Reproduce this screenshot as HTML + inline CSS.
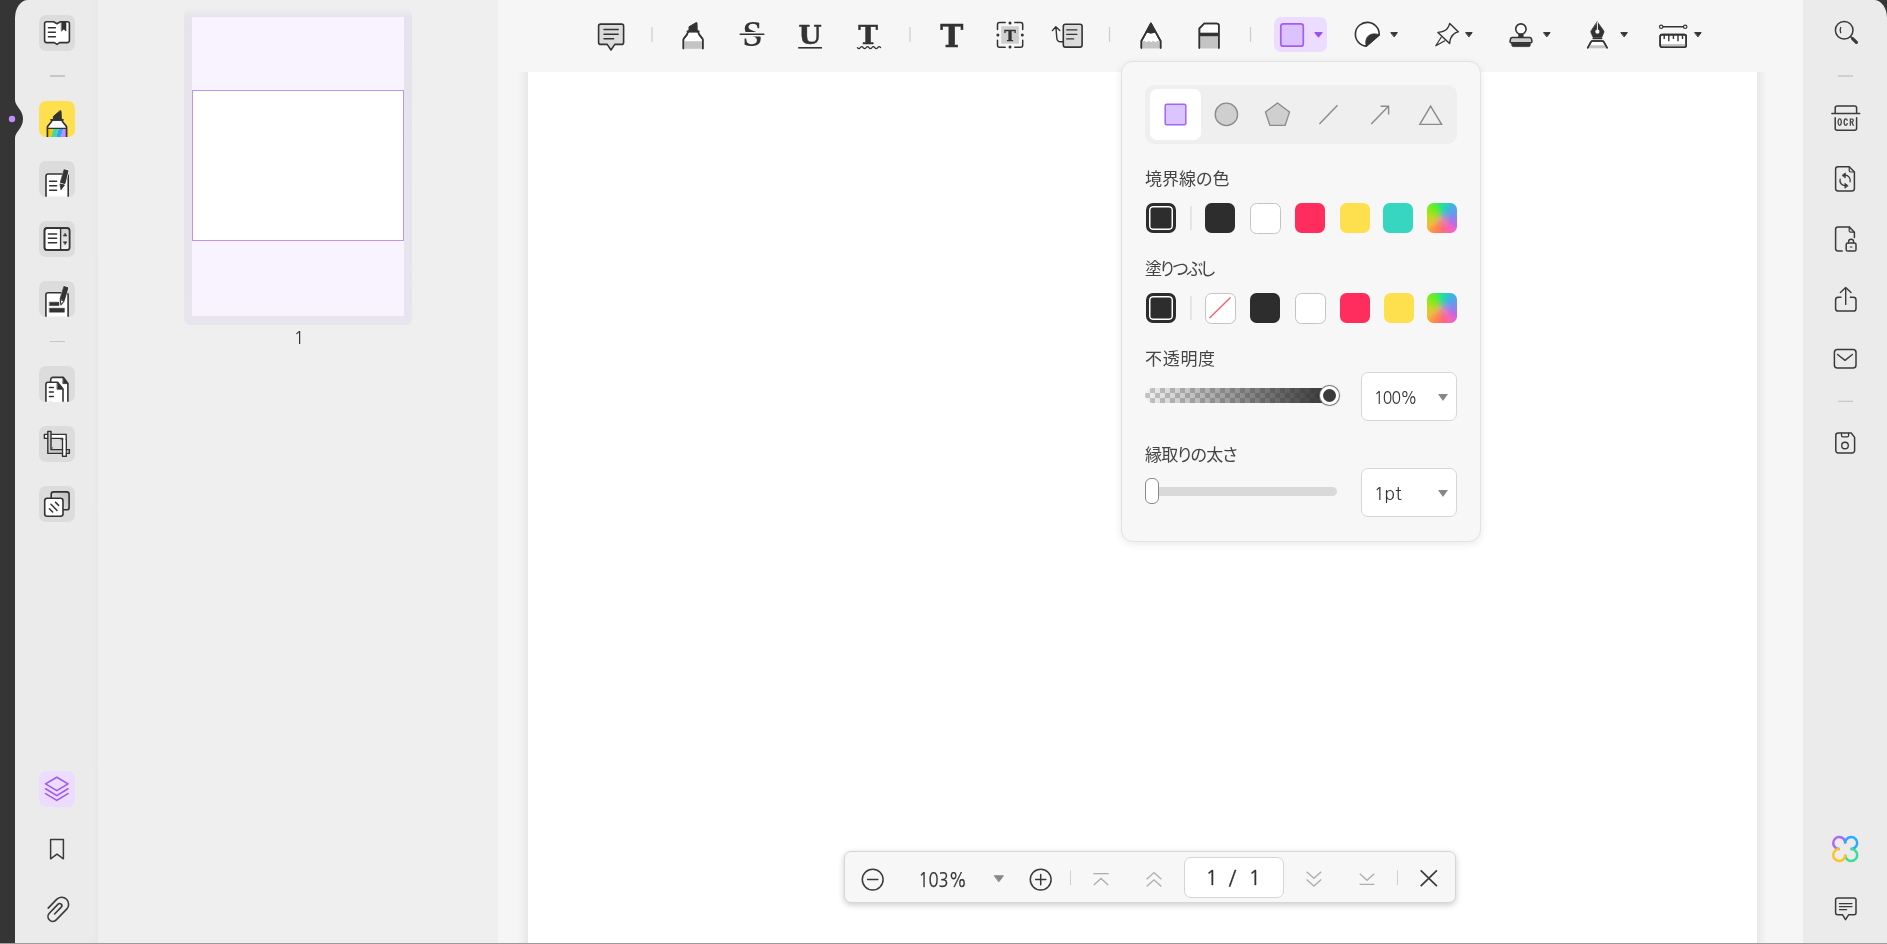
<!DOCTYPE html>
<html lang="ja">
<head>
<meta charset="utf-8">
<title>UPDF</title>
<style>
*{box-sizing:border-box;margin:0;padding:0}
html,body{width:1887px;height:944px;overflow:hidden}
body{position:relative;background:#353535;font-family:"Liberation Sans","Noto Sans CJK JP",sans-serif;color:#333}
.abs{position:absolute}
#lside{left:15px;top:0;width:83px;height:943px;background:#ebebeb;border-top-left-radius:13px 18px}
#thumbs{left:98px;top:0;width:400px;height:943px;background:#efefef}
#main{left:498px;top:0;width:1305px;height:943px;background:#f6f6f6}
#rside{left:1803px;top:0;width:84px;height:943px;background:#ebebeb;border-top-right-radius:13px 18px}
#page{left:528px;top:72px;width:1229px;height:871px;background:#fff}
.btn{position:absolute;left:39px;width:36px;height:36px;border-radius:7px;background:#dcdcdc}
.sep{position:absolute;height:1.2px;background:#c6c6c6}
svg{position:absolute;overflow:visible;will-change:transform}
.lbl,.selbox,.gs{will-change:transform}

#pop{left:1121px;top:61px;width:360px;height:481px;background:#f7f7f7;border:1px solid #e2e2e2;border-radius:12px;box-shadow:0 2px 8px rgba(0,0,0,.085)}
.lbl{position:absolute;left:1145.4px;font-size:17px;line-height:24px;color:#444;white-space:nowrap;font-feature-settings:"palt" 1}
.sw{position:absolute;width:30px;height:30px;border-radius:6.5px}
.swsel{position:absolute;left:1146px;width:30px;height:30px;border-radius:7px;background:#2d2d2d;border:3px solid #2d2d2d;box-shadow:inset 0 0 0 1.5px #fff}
.vsep{position:absolute;width:2px;background:#e4e4e4}
.selbox{position:absolute;left:1361px;width:96px;height:49px;background:#fff;border:1.4px solid #d6d6d6;border-radius:7px;font-family:"NanumGothic","Liberation Sans",sans-serif;font-size:17.5px;line-height:47px;padding-left:12px;color:#333}
.tri{position:absolute;width:0;height:0;border-left:5px solid transparent;border-right:5px solid transparent;border-top:7px solid #888}
.rainbow{background:radial-gradient(circle at 50% 52%,rgba(206,160,170,.75) 0,rgba(206,160,170,0) 45%),conic-gradient(from 0deg at 50% 50%,#22dfa0 0deg,#3fb4e0 40deg,#7c8cf0 80deg,#b56ee6 110deg,#f562c0 140deg,#ff6880 175deg,#ff8a48 210deg,#f2b840 240deg,#c6d822 270deg,#86ea18 305deg,#4aec48 340deg,#22dfa0 360deg)}
.nar{display:inline-block;transform:scaleX(.9);transform-origin:0 50%;letter-spacing:-.9px}
.selbox{line-height:51px !important}
</style>
</head>
<body>
<div class="abs" style="left:0;top:943px;width:1887px;height:1px;background:#9b9b9b"></div>
<div id="lside" class="abs"></div>
<div id="thumbs" class="abs"></div>
<div class="abs" style="left:91px;top:0;width:7px;height:943px;background:linear-gradient(90deg,#ebebeb,#e8e8e8)"></div>
<div id="main" class="abs"></div>
<div id="rside" class="abs"></div>
<div class="abs" style="left:518px;top:72px;width:10px;height:871px;background:linear-gradient(90deg,#f6f6f6,#e8e8e8)"></div>
<div class="abs" style="left:1757px;top:72px;width:10px;height:871px;background:linear-gradient(90deg,#e8e8e8,#f6f6f6)"></div>
<div id="page" class="abs"></div>

<!-- left notch -->
<svg class="abs" style="left:0;top:96px" width="30" height="46" viewBox="0 0 30 46">
<path d="M15 0 L15 4 C15 10 23 14 23 23 C23 32 15 36 15 42 L15 46 L0 46 L0 0 Z" fill="#353535"/>
<circle cx="12" cy="23" r="3.2" fill="#c18cfb"/>
</svg>
<!-- left sidebar buttons -->
<div class="btn" style="top:15px"></div>
<div class="sep" style="left:50px;top:75.4px;width:15px"></div>
<div class="btn" style="top:101px;background:#fee04f"></div>
<div class="btn" style="top:161px"></div>
<div class="btn" style="top:221px"></div>
<div class="btn" style="top:281px"></div>
<div class="sep" style="left:50px;top:340.7px;width:15px"></div>
<div class="btn" style="top:366px"></div>
<div class="btn" style="top:426px"></div>
<div class="btn" style="top:486px"></div>
<div class="btn" style="top:771px;background:#ecdcff"></div>
<!-- thumbnail -->
<div class="abs" style="left:184px;top:9px;width:228px;height:316px;background:linear-gradient(180deg,#ededee 0,#e7e3ed 8px,#e9e5ef 100%);border-radius:6px"></div>
<div class="abs" style="left:192px;top:17px;width:212px;height:299px;background:#f8f3fe"></div>
<div class="abs" style="left:192px;top:90px;width:212px;height:151px;background:#fff;border:1.4px solid #bd95f6"></div>
<div class="abs" style="left:279px;top:325.6px;width:40px;text-align:center;font-family:'NanumGothic','Liberation Sans',sans-serif;font-size:17.5px;line-height:24px;color:#333;will-change:transform">1</div>

<!-- popup -->
<div id="pop" class="abs"></div>
<div class="abs" style="left:1145px;top:85px;width:312px;height:59px;background:#efefef;border-radius:9px"></div>
<div class="abs" style="left:1150px;top:89px;width:51px;height:51px;background:#fff;border-radius:7px"></div>
<svg class="abs" style="left:1145px;top:85px" width="312" height="59" viewBox="1145 85 312 59" fill="none">
<rect x="1165.2" y="104.2" width="20.6" height="20.6" rx="1.5" fill="#dcc5ff" stroke="#a066f5" stroke-width="1.5"/>
<circle cx="1226.4" cy="114.4" r="11.2" fill="#cfcfcf" stroke="#8a8a8a" stroke-width="1.3"/>
<path d="M1277.5 102.9 L1289.6 111.9 L1285.2 125.3 L1269.8 125.3 L1265.4 111.9 Z" fill="#cfcfcf" stroke="#8a8a8a" stroke-width="1.3" stroke-linejoin="round"/>
<path d="M1319.4 123.9 L1337.5 105.3" stroke="#8a8a8a" stroke-width="1.4"/>
<path d="M1371.2 124.1 L1388.5 106.3 M1380.6 106.2 L1388.6 106.2 L1388.6 114.4" stroke="#8a8a8a" stroke-width="1.4"/>
<path d="M1430.6 106.2 L1441.6 124.4 L1419.8 124.4 Z" stroke="#8a8a8a" stroke-width="1.4" stroke-linejoin="miter"/>
</svg>
<div class="lbl" style="top:168px">境界線の色</div>
<div class="swsel" style="top:203px"></div>
<div class="vsep" style="left:1190px;top:206px;height:24px"></div>
<div class="sw" style="left:1205px;top:203px;background:#2d2d2d"></div>
<div class="sw" style="left:1249.5px;top:202.5px;width:31px;height:31px;background:#fff;border:1.6px solid #c4c4c4"></div>
<div class="sw" style="left:1295px;top:203px;background:#ff2d5d"></div>
<div class="sw" style="left:1340px;top:203px;background:#fee04f"></div>
<div class="sw" style="left:1383px;top:203px;background:#37d6c1"></div>
<div class="sw rainbow" style="left:1427px;top:203px"></div>
<div class="lbl" style="top:258px;letter-spacing:-1.9px">塗りつぶし</div>
<div class="swsel" style="top:293px"></div>
<div class="vsep" style="left:1190px;top:296px;height:24px"></div>
<div class="sw" style="left:1204.5px;top:292.5px;width:31px;height:31px;background:#fff;border:1.6px solid #c4c4c4;overflow:hidden"></div>
<svg class="abs" style="left:1205px;top:293px" width="30" height="30" viewBox="0 0 30 30"><path d="M4.5 25 L25.5 4.5" stroke="#ff5a6a" stroke-width="1.3"/></svg>
<div class="sw" style="left:1249.5px;top:293px;background:#2d2d2d"></div>
<div class="sw" style="left:1294.5px;top:292.5px;width:31px;height:31px;background:#fff;border:1.6px solid #c4c4c4"></div>
<div class="sw" style="left:1340px;top:293px;background:#ff2d5d"></div>
<div class="sw" style="left:1383.5px;top:293px;background:#fee04f"></div>
<div class="sw rainbow" style="left:1427px;top:293px"></div>
<div class="lbl" style="top:348px;letter-spacing:.7px">不透明度</div>
<!-- opacity slider -->
<div class="abs" style="left:1145px;top:388px;width:193px;height:15px;border-radius:8px;overflow:hidden;background-color:#f2f2f2;background-image:linear-gradient(45deg,#c4c4c4 25%,transparent 25%,transparent 75%,#c4c4c4 75%),linear-gradient(45deg,#c4c4c4 25%,transparent 25%,transparent 75%,#c4c4c4 75%);background-size:10px 10px;background-position:0 0,5px 5px"><div style="position:absolute;left:0;top:0;right:0;bottom:0;background:linear-gradient(90deg,rgba(45,45,45,0) 0%,rgba(45,45,45,1) 100%)"></div></div>
<div class="abs" style="left:1320px;top:385.5px;width:19px;height:19px;border-radius:50%;background:#3a3a3a;border:3px solid #fff;box-shadow:0 0 0 1px #7a7a7a,0 0 3px rgba(0,0,0,.3)"></div>
<div class="selbox" style="top:372px"><span class="nar">100%</span></div>
<div class="tri" style="left:1438px;top:394px"></div>
<div class="lbl" style="top:444px;letter-spacing:-.85px">縁取りの太さ</div>
<div class="abs" style="left:1150px;top:487px;width:187px;height:9px;border-radius:5px;background:#d9d9d9"></div>
<div class="abs" style="left:1145px;top:478px;width:13.5px;height:26px;border-radius:6px;background:#fff;border:1.5px solid #8a8a8a"></div>
<div class="selbox" style="top:468px"><span>1pt</span></div>
<div class="tri" style="left:1438px;top:490px"></div>

<!-- top toolbar -->
<div class="abs" style="left:1274px;top:17px;width:53px;height:35px;border-radius:7px;background:#ecdcff"></div>
<svg class="abs" style="left:580px;top:0" width="1140" height="70" viewBox="580 0 1140 70" fill="none" stroke-linecap="round" stroke-linejoin="round">
<g stroke="#333" stroke-width="1.6">
<!-- comment -->
<path d="M600.6 24.1 H621.6 a2 2 0 0 1 2 2 V42.4 a2 2 0 0 1 -2 2 H614.8 L611 50 L607.2 44.4 H600.6 a2 2 0 0 1 -2 -2 V26.1 a2 2 0 0 1 2 -2 Z" fill="#dcdcdc"/>
<path d="M604 29.6 H618.2 M604 34.3 H618.2 M604 38.7 H613.6" stroke-width="1.5"/>
<!-- highlighter -->
<path d="M683.4 48.6 V39.6 C683.4 37.6 687.4 36.2 688.2 31.4 H698 C698.8 36.2 702.8 37.6 702.8 39.6 V48.6" fill="#fff"/>
<path d="M684.2 41.2 H702 V48.8 H684.2 Z" fill="#c4c4c4" stroke="none"/>
<path d="M683.4 48.6 V39.6 C683.4 37.6 687.4 36.2 688.2 31.4 H698 C698.8 36.2 702.8 37.6 702.8 39.6 V48.6" stroke-width="1.5"/>
<path d="M689 31 V26.8 L696.2 22.6 Q697 22.3 697 23.2 L697.2 31 Z" fill="#333" stroke-width="1"/>
<path d="M687.4 31.3 H698.8" stroke-width="1.7"/>
<!-- strike line / underline -->
<path d="M798.2 47.8 H822" stroke-width="1.6" stroke-linecap="butt"/>
<path d="M857.4 47.6 q1.45 2 2.9 0 q1.45 -2 2.9 0 q1.45 2 2.9 0 q1.45 -2 2.9 0 q1.45 2 2.9 0 q1.45 -2 2.9 0 q1.45 2 2.9 0 q1.45 -2 2.9 0" stroke-width="1.2"/>
<!-- textbox -->
<rect x="1001.2" y="26.2" width="17.7" height="17.5" fill="#cfcfcf" stroke="none"/>
<path d="M997.5 29.5 V24.4 a2 2 0 0 1 2 -2 H1005.2 M1014.8 22.4 H1020.7 a2 2 0 0 1 2 2 V29.5 M1022.7 40.3 V45.3 a2 2 0 0 1 -2 2 H1014.8 M1005.2 47.3 H999.5 a2 2 0 0 1 -2 -2 V40.3" stroke-width="1.5"/>
<g fill="#333" stroke="none"><circle cx="1010" cy="22.9" r="1.5"/><circle cx="1010" cy="47" r="1.5"/><circle cx="997.9" cy="35" r="1.5"/><circle cx="1022.3" cy="35" r="1.5"/></g>
<!-- callout -->
<rect x="1063.3" y="24.3" width="18.8" height="22.8" rx="2.2" fill="#dcdcdc"/>
<path d="M1066.8 29.9 H1076.8 M1066.8 34.4 H1076.8 M1066.8 38.9 H1073.6" stroke-width="1.4"/>
<path d="M1063 41.8 H1060.5 Q1057 41.8 1056.8 38 L1055.9 27 M1052.4 30.6 L1055.8 26.7 L1059.8 30.4" stroke-width="1.4"/>
<!-- pencil -->
<path d="M1141.4 48 V41 L1151 23.6 L1160.6 41 V48" fill="#fff"/>
<path d="M1142.2 41.6 L1144.6 40.8 L1146.6 42.2 L1148.8 40.8 L1151 42.2 L1153.2 40.8 L1155.4 42.2 L1157.4 40.8 L1159.8 41.6 V48.4 H1142.2 Z" fill="#c4c4c4" stroke="none"/>
<path d="M1141.4 48 V41 L1151 23.6 L1160.6 41 V48"/>
<path d="M1151 23 L1155.6 32 Q1151 34.4 1146.4 32 Z" fill="#333" stroke-width="1"/>
<!-- eraser -->
<path d="M1199.4 48 V28.4 L1204.2 23.5 H1216.8 a2 2 0 0 1 2 2 V48" fill="#fff"/>
<path d="M1200.2 36 H1218 V48.4 H1200.2 Z" fill="#c4c4c4" stroke="none"/>
<path d="M1199.4 32.7 H1218.8 V36.2 H1199.4 Z" fill="#333" stroke="none"/>
<path d="M1199.4 48 V28.4 L1204.2 23.5 H1216.8 a2 2 0 0 1 2 2 V48"/>
<!-- sticker -->
<path d="M1379.2 34.8 A11.9 11.9 0 1 0 1366.2 46.1 Z" fill="#fff"/>
<path d="M1366.2 46.1 C1365.2 41 1366.2 37.4 1369.2 35.4 C1372.4 33.4 1376 33.6 1379.2 34.8 Z" fill="#333" stroke-width="1"/>
<!-- pin -->
<path d="M1449.7 23.4 L1458.3 31.7 C1454.6 32.6 1452 35.4 1450.7 38.2 C1449.8 40.2 1449.8 42 1449.6 43.6 L1437.9 32.4 C1439.8 32.2 1441.8 32 1443.6 31.2 C1446.4 30 1448.8 27.4 1449.7 23.4 Z" stroke-width="1.4"/>
<path d="M1441.2 37.2 L1435.8 45.8 L1444.9 40.8" stroke-width="1.2"/>
<!-- stamp -->
<circle cx="1520.9" cy="29.1" r="5.2" fill="#fff"/>
<path d="M1518.6 34 V37.4 H1523.2 V34 Z" fill="#333" stroke-width=".6"/>
<path d="M1512.4 37.4 H1529.6 Q1531.2 37.4 1531.5 39 L1532 41.6 Q1532 42.8 1530.8 42.8 H1511.2 Q1510 42.8 1510 41.6 L1510.5 39 Q1510.8 37.4 1512.4 37.4 Z" fill="#ccc" stroke-width="1.5"/>
<path d="M1511.8 43.2 H1530.2 V45.2 Q1530.2 46.6 1528.8 46.6 H1513.2 Q1511.8 46.6 1511.8 45.2 Z" fill="#333" stroke-width=".8"/>
<!-- pen nib -->
<path d="M1597.4 21.9 L1603.8 31 Q1604.2 32 1603.6 33 L1601.6 37.6 H1593.2 L1591.2 33 Q1590.6 32 1591 31 Z" fill="#333" stroke-width=".8"/>
<path d="M1597.4 22.4 V30" stroke="#f6f6f6" stroke-width="1"/>
<circle cx="1597.4" cy="31.7" r="2.1" fill="#f6f6f6" stroke="none"/>
<path d="M1593 38.6 H1601.8" stroke-width="1.4"/>
<path d="M1587.7 47.8 L1591 41.8 Q1591.5 40.9 1592.6 40.9 H1602.2 Q1603.3 40.9 1603.8 41.8 L1607.1 47.8" fill="#fff" stroke-width="1.5"/>
<path d="M1589.6 45.2 H1605.2 L1606.6 48.2 H1588.2 Z" fill="#c4c4c4" stroke="none"/>
<path d="M1587.7 47.8 L1591 41.8 Q1591.5 40.9 1592.6 40.9 H1602.2 Q1603.3 40.9 1603.8 41.8 L1607.1 47.8" stroke-width="1.5"/>
<!-- ruler -->
<path d="M1663 26.8 H1683.4" stroke-width="1.4"/>
<circle cx="1661.2" cy="26.8" r="1.7" fill="#fff" stroke-width="1.2"/><circle cx="1685.2" cy="26.8" r="1.7" fill="#fff" stroke-width="1.2"/>
<rect x="1660.2" y="34.6" width="26" height="12.6" rx="2" fill="#fff"/>
<path d="M1661 44 H1685.4 V46.4 H1661 Z" fill="#c4c4c4" stroke="none"/>
<rect x="1660.2" y="34.6" width="26" height="12.6" rx="2"/>
<path d="M1664.2 35 V39 M1668.8 35 V41.2 M1673.4 35 V39 M1678 35 V41.2 M1682.5 35 V39" stroke-width="1.4" stroke-linecap="butt"/>
</g>
<!-- rect tool -->
<rect x="1280.8" y="23.9" width="22.5" height="22.3" rx="2.5" fill="#dcc2ff" stroke="#a15ef5" stroke-width="1.7"/>
<path d="M1315 32.6 H1322 L1318.5 36.8 Z" fill="#9b51f0" stroke="#9b51f0" stroke-width="1.2"/>
<!-- dropdown arrows -->
<g fill="#333" stroke="#333" stroke-width="1">
<path d="M1391.2 32.6 H1397.4 L1394.3 36.6 Z"/>
<path d="M1466 32.6 H1472.2 L1469.1 36.6 Z"/>
<path d="M1543.9 32.6 H1550.1 L1547 36.6 Z"/>
<path d="M1621.2 32.6 H1627.4 L1624.3 36.6 Z"/>
<path d="M1695 32.6 H1701.2 L1698.1 36.6 Z"/>
</g>
<!-- separators -->
<g stroke="#cdcdcd" stroke-width="1.2" stroke-linecap="butt">
<path d="M652 27 V42 M910 27 V42 M1109.5 27 V42 M1250.5 27 V42"/>
</g>
<!-- serif letters -->
<g fill="#333" stroke="#333" stroke-width=".5" font-family="'DejaVu Serif','Liberation Serif',serif" font-weight="bold" text-anchor="middle">
<text x="752.5" y="46.3" font-size="35" font-family="'Liberation Serif',serif" stroke="none">S</text>
<text x="810" y="43.6" font-size="26.5">U</text>
<text x="868.2" y="43.6" font-size="26.5">T</text>
<text x="951.8" y="46.8" font-size="31">T</text>
<text x="1010" y="40.7" font-size="15.5" stroke-width=".3">T</text>
</g>
<path d="M742 34.2 H762.5" stroke="#f6f6f6" stroke-width="4.6"/>
<path d="M740.2 34.2 H763.8" stroke="#333" stroke-width="1.5"/>
<g>
</g>
</svg>

<!-- bottom bar -->
<div class="abs" style="left:844px;top:851px;width:612px;height:52px;background:#f7f7f7;border:1px solid #d6d6d6;border-radius:7px;box-shadow:0 2px 6px rgba(0,0,0,.2)"></div>
<div class="abs" style="left:1184px;top:857px;width:100px;height:41px;background:#fff;border:1px solid #d4d4d4;border-radius:7px"></div>
<svg class="abs" style="left:844px;top:851px" width="612" height="52" viewBox="844 851 612 52" fill="none" stroke-linecap="round" stroke-linejoin="round">
<g stroke="#3a3a3a" stroke-width="1.5">
<circle cx="872.7" cy="879.6" r="10.4"/><path d="M867.6 879.6 H877.8"/>
<circle cx="1040.7" cy="879.6" r="10.4"/><path d="M1035.6 879.6 H1045.8 M1040.7 874.5 V884.7"/>
<path d="M1420.7 870.4 L1436.9 886.2 M1436.9 870.4 L1420.7 886.2" stroke-width="1.7" stroke-linecap="butt"/>
</g>
<path d="M994.6 875.8 H1003.4 L999 881.6 Z" fill="#888" stroke="#888" stroke-width="1"/>
<g stroke="#cfcfcf" stroke-width="1" stroke-linecap="butt"><path d="M1070.5 870.4 V885 M1397.5 870.4 V885"/></g>
<g stroke="#adadad" stroke-width="1.3" stroke-linecap="butt" stroke-linejoin="miter">
<path d="M1093.4 873.6 H1108.6 M1093.8 884.9 L1101 878.4 L1108.2 884.9"/>
<path d="M1146.6 879.3 L1154 872.6 L1161.4 879.3 M1146.6 886.5 L1154 879.8 L1161.4 886.5"/>
<path d="M1306.6 871.7 L1313.9 878.3 L1321.2 871.7 M1306.6 879.5 L1313.9 886.1 L1321.2 879.5"/>
<path d="M1359.8 873.7 L1367 880.3 L1374.2 873.7 M1359.6 884.4 H1374.4"/>
</g>
<g fill="#333" font-family="'NanumGothic','Liberation Sans',sans-serif">
<text x="918.4" y="887.4" font-size="19" textLength="48.4" lengthAdjust="spacingAndGlyphs" stroke="#333" stroke-width=".25">103%</text>
<text x="1211.6" y="885.3" font-size="20.5" text-anchor="middle" stroke="#333" stroke-width=".3">1</text>
<text x="1232.4" y="885.3" font-size="20.5" text-anchor="middle" stroke="#333" stroke-width=".3">/</text>
<text x="1254.6" y="885.3" font-size="20.5" text-anchor="middle" stroke="#333" stroke-width=".3">1</text>
</g>
</svg>

<!-- right sidebar -->
<svg class="abs" style="left:1803px;top:0" width="84" height="944" viewBox="1803 0 84 944" fill="none" stroke="#3a3a3a" stroke-width="1.5" stroke-linecap="round" stroke-linejoin="round">
<!-- search -->
<circle cx="1844.2" cy="30.3" r="8.8"/>
<path d="M1840.7 27.5 Q1839.6 30.2 1840.7 32.7" stroke-width="1.3"/>
<path d="M1850.6 36.6 L1852.2 38.2" stroke-width="1.5"/>
<path d="M1852.6 38.6 L1856.4 42.4" stroke-width="3.2"/>
<!-- separators -->
<path d="M1838 76 H1853 M1838 401.3 H1853" stroke="#c8c8c8" stroke-width="1.3" stroke-linecap="butt"/>
<!-- OCR -->
<path d="M1835.2 113.2 V108.1 a2 2 0 0 1 2 -2 H1854.6 a2 2 0 0 1 2 2 V113.2"/>
<path d="M1831.9 113.6 H1859.7"/>
<path d="M1835.2 117.8 V128.2 a2 2 0 0 0 2 2 H1854.6 a2 2 0 0 0 2 -2 V117.8"/>
<text x="1837.2" y="126.1" font-family="'IPAGothic','Liberation Sans',sans-serif" font-weight="bold" font-size="9.8" letter-spacing="1.15" fill="#3a3a3a" stroke="none">OCR</text>
<!-- convert -->
<path d="M1849.2 166.7 H1838 a2.4 2.4 0 0 0 -2.4 2.4 V188.5 a2.4 2.4 0 0 0 2.4 2.4 H1852 a2.4 2.4 0 0 0 2.4 -2.4 V172 Z"/>
<path d="M1849.2 166.9 V170.6 Q1849.2 172 1850.6 172 H1854.2" stroke-width="1.2"/>
<path d="M1844.65 175.2 A5.2 5.2 0 0 1 1850.1 181.75 M1845.55 185.6 A5.2 5.2 0 0 1 1840.1 179.05" stroke-width="1.3"/>
<path d="M1842.3 175.2 L1845.3 172.9 V177.5 Z M1847.9 185.6 L1844.9 183.3 V187.9 Z" fill="#3a3a3a" stroke-width=".8"/>
<!-- protect -->
<path d="M1842.2 251 H1838 a2.4 2.4 0 0 1 -2.4 -2.4 V229.3 a2.4 2.4 0 0 1 2.4 -2.4 H1849.2 L1854.4 232.2 V237.6"/>
<path d="M1849.2 227.1 V230.8 Q1849.2 232.2 1850.6 232.2 H1854.2" stroke-width="1.2"/>
<rect x="1846.2" y="243" width="9.8" height="8" rx="1.6"/>
<path d="M1848.6 242.8 V241.8 a2.5 2.5 0 0 1 5 0 V242.8" stroke-width="1.4"/>
<path d="M1850.2 247 H1852" stroke-width="1.1"/>
<!-- share -->
<path d="M1841 297.3 H1838.2 a2.6 2.6 0 0 0 -2.6 2.6 V308.4 a2.6 2.6 0 0 0 2.6 2.6 H1853.4 a2.6 2.6 0 0 0 2.6 -2.6 V299.9 a2.6 2.6 0 0 0 -2.6 -2.6 H1850.4"/>
<path d="M1845.7 304.4 V288 M1840.4 292.4 L1845.7 287.4 L1851 292.4" stroke-width="1.4"/>
<!-- mail -->
<rect x="1834.4" y="349.5" width="21.6" height="18.5" rx="3"/>
<path d="M1837.6 354.5 L1845 360.4 L1852.4 354.5" stroke-width="1.4"/>
<!-- save -->
<path d="M1838.2 433 H1851.2 L1854.6 437.4 V450.6 a2.4 2.4 0 0 1 -2.4 2.4 H1838.2 a2.4 2.4 0 0 1 -2.4 -2.4 V435.4 a2.4 2.4 0 0 1 2.4 -2.4 Z"/>
<path d="M1841.5 433.2 V435.6 a1.3 1.3 0 0 0 1.3 1.3 H1847.3 a1.3 1.3 0 0 0 1.3 -1.3 V433.2" stroke-width="1.3"/>
<circle cx="1845" cy="445.5" r="3.3" stroke-width="1.4"/>
<!-- AI flower -->
<g stroke-width="2.5" stroke-linecap="butt">
<path d="M1845.2 843.4 A6 6 0 1 0 1839.6 849" stroke="#a86bf5"/>
<path d="M1850.6 849 A6 6 0 1 0 1845.2 843.4" stroke="#29a9ff"/>
<path d="M1845.2 854.6 A6 6 0 1 0 1850.6 849" stroke="#3ddc97"/>
<path d="M1839.6 849 A6 6 0 1 0 1845.2 854.6" stroke="#ffc220"/>
</g>
<!-- comment -->
<path d="M1837.6 898 H1854 a2 2 0 0 1 2 2 V912.8 a2 2 0 0 1 -2 2 H1848.6 L1845.5 919.6 L1842.6 914.8 H1837.6 a2 2 0 0 1 -2 -2 V900 a2 2 0 0 1 2 -2 Z"/>
<path d="M1839.4 903.6 H1852 M1839.4 906.6 H1852 M1839.4 909.6 H1846.6" stroke-width="1.2"/>
</svg>

<!-- left sidebar icons -->
<svg class="abs" style="left:15px;top:0" width="83" height="944" viewBox="15 0 83 944" fill="none" stroke="#333" stroke-width="1.6" stroke-linecap="round" stroke-linejoin="round">
<defs>
<clipPath id="c2"><rect x="39" y="101" width="36" height="36" rx="7"/></clipPath>
<clipPath id="c3"><rect x="39" y="161" width="36" height="35.7"/></clipPath>
<clipPath id="c5"><rect x="39" y="281" width="36" height="35.8"/></clipPath>
<clipPath id="c6"><rect x="39" y="366" width="36" height="35.8"/></clipPath>
<linearGradient id="gsc" x1="0" y1="0" x2="0" y2="1"><stop offset="0" stop-color="#cfcfcf"/><stop offset="1" stop-color="#f2f2f2"/></linearGradient>
<linearGradient id="gsq" x1="1" y1="0" x2="0" y2="1"><stop offset="0" stop-color="#bdbdbd"/><stop offset="1" stop-color="#ececec"/></linearGradient>
</defs>
<!-- book -->
<path d="M46.6 21.8 H53.6 L57 23.8 L60.4 21.8 H67.4 a2 2 0 0 1 2 2 V40.6 a2 2 0 0 1 -2 2 H59.6 L57 44.4 L54.4 42.6 H46.6 a2 2 0 0 1 -2 -2 V23.8 a2 2 0 0 1 2 -2 Z" fill="#fff"/>
<path d="M48.4 27.7 H55.4 M48.4 32.3 H55.4 M48.4 36.8 H55.4" stroke-width="1.5"/>
<path d="M61.6 21.8 H66 V31 L63.8 29.2 L61.6 31 Z" fill="#333" stroke-width=".6"/>
<!-- highlighter (yellow) -->
<g clip-path="url(#c2)">
<path d="M47.4 140 V127.4 C47.4 124.6 51.6 123.6 52.2 119.8 H61.8 C62.4 123.6 66.6 124.6 66.6 127.4 V140 Z" fill="#fff" stroke="none"/>
<path d="M48 129 H53.4 L50.6 138 H48 Z" fill="#ffc400" stroke="none"/>
<path d="M53.4 129 H58.6 L55.8 138 H50.6 Z" fill="#3ddc97" stroke="none"/>
<path d="M58.6 129 H63.4 L60.6 138 H55.8 Z" fill="#3aa0f0" stroke="none"/>
<path d="M63.4 129 H66 V138 H60.6 Z" fill="#c08cff" stroke="none"/>
<path d="M47.4 140 V127.4 C47.4 124.6 51.6 123.6 52.2 119.8 H61.8 C62.4 123.6 66.6 124.6 66.6 127.4 V140" stroke-width="1.7"/>
<path d="M47.6 128.4 H66.4" stroke-width="1.3"/>
<path d="M53.4 119.4 V116.4 L60 110.8 Q61 110.2 61 111.4 L61.4 119.4 Z" fill="#333" stroke-width="1"/>
<path d="M51 119.8 H63" stroke-width="1.7"/>
</g>
<!-- edit -->
<g clip-path="url(#c3)">
<path d="M46 200 V176.2 a2.2 2.2 0 0 1 2.2 -2.2 H66 a2.2 2.2 0 0 1 2.2 2.2 V200 Z" fill="#fff"/>
<path d="M49.6 181.2 H56.6 M49.6 185.8 H56.6 M49.6 190.2 H56.6" stroke-width="1.5"/>
<path d="M64.3 169.7 L68.1 170.7 L64.9 183.6 L60.7 182.5 Z" fill="#333" stroke="#fff" stroke-width="2" paint-order="stroke"/>
<path d="M60.4 184 L64.5 185.1 L61.1 189.4 Z" fill="#333" stroke="#fff" stroke-width="2" paint-order="stroke"/>
<path d="M64.3 169.7 L68.1 170.7 L64.9 183.6 L60.7 182.5 Z M60.4 184 L64.5 185.1 L61.1 189.4 Z" fill="#333" stroke="#333" stroke-width=".8"/>
</g>
<!-- form -->
<rect x="44.5" y="228.1" width="25" height="21.8" rx="2.4" fill="#fff"/>
<path d="M60.6 228.4 H67.1 a2.2 2.2 0 0 1 2.2 2.2 V247.4 a2.2 2.2 0 0 1 -2.2 2.2 H60.6 Z" fill="url(#gsc)" stroke="none"/>
<rect x="44.5" y="228.1" width="25" height="21.8" rx="2.4"/>
<path d="M60.6 228.4 V249.6" stroke-width="1.4"/>
<path d="M48.4 233.9 H56.6 M48.4 238.3 H56.6 M48.4 242.7 H56.6" stroke-width="1.5"/>
<path d="M63.6 236 H66.8 L65.2 233.4 Z M63.6 241.8 H66.8 L65.2 244.4 Z" fill="#333" stroke-width=".6"/>
<!-- redact -->
<g clip-path="url(#c5)">
<path d="M45.9 320 V295 a2.2 2.2 0 0 1 2.2 -2.2 H65.9 a2.2 2.2 0 0 1 2.2 2.2 V320 Z" fill="#fff"/>
<rect x="49.6" y="302.2" width="9.4" height="3.4" fill="#333" stroke-width=".5"/>
<rect x="49.6" y="308.2" width="14.8" height="4" fill="#333" stroke-width=".5"/>
<path d="M64.2 286.5 L68 287.7 L64.4 300 L60.4 298.8 Z" fill="#333" stroke="#fff" stroke-width="2" paint-order="stroke"/>
<path d="M64.2 286.5 L68 287.7 L64.4 300 L60.4 298.8 Z" fill="#333" stroke="#333" stroke-width=".8"/>
<path d="M60.2 299.6 L64.2 300.8 L60.9 305 Z" fill="#fff" stroke-width="1.1"/>
</g>
<!-- pages -->
<g clip-path="url(#c6)">
<path d="M50.7 405 V379.6 a2.2 2.2 0 0 1 2.2 -2.2 H63.4 L67.9 383.4 V405 Z" fill="#fff"/>
<path d="M63.2 377.6 L67.8 383.6 H63.2 Z" fill="#333" stroke-width=".8"/>
<path d="M45.9 405 V384.4 a2.2 2.2 0 0 1 2.2 -2.2 H57.6 L63 389 V405 Z" fill="#fff"/>
<path d="M57.4 382.4 L62.9 389.2 H57.4 Z" fill="#333" stroke-width=".8"/>
<path d="M49.4 387.4 H53.4 M49.4 392 H53.4 M49.4 396.6 H53.4" stroke-width="1.5"/>
</g>
<!-- crop -->
<path d="M44.4 434.4 H66.2 V456.2 H62.6 V438.4 H44.4 Z" fill="#fff" stroke-width="1.4"/>
<path d="M47.8 431.4 H51 V449.6 H69.4 V453.4 H47.8 Z" fill="#c9c9c9" stroke-width="1.4"/>
<path d="M62.6 456.2 V440 M66.2 440 V456.2 H62.6" fill="none" stroke-width="1.4"/>
<rect x="63.3" y="440" width="2.2" height="15.5" fill="#fff" stroke="none"/>
<path d="M51.6 448.8 L52.6 447.8 M60.8 439.6 L61.8 438.8" stroke-width="1"/>
<!-- watermark -->
<rect x="51.2" y="491.9" width="17.9" height="17.9" rx="2.4" fill="url(#gsq)"/>
<rect x="44.7" y="498.3" width="18.3" height="17.9" rx="2.4" fill="#fff"/>
<path d="M55.6 502.4 L58.6 505.4 M51 504.2 L57 510.4 M49.4 508.8 L52.6 512" stroke-width="1.5"/>
<!-- layers -->
<g stroke="#9f57f5" stroke-width="1.6">
<path d="M56.8 777.2 L68 783.9 L56.8 790.6 L45.6 783.9 Z"/>
<path d="M45.6 788.8 L56.8 795.6 L68 788.8"/>
<path d="M45.6 793.6 L56.8 800.4 L68 793.6"/>
</g>
<!-- bookmark -->
<path d="M50.6 839.4 H63.4 V858.8 L57 854.2 L50.6 858.8 Z" stroke="#3a3a3a" stroke-width="1.5"/>
<!-- paperclip -->
<path d="M48.2 908.1 L56.6 899.4 A7 7 0 0 1 66.67 909.13 L56.25 919.9 A4.82 4.82 0 0 1 49.32 913.2 L58.08 904.14 A2.17 2.17 0 0 1 61.2 907.16 L54.6 914" stroke="#3a3a3a" stroke-width="1.6"/>
</svg>
</body>
</html>
